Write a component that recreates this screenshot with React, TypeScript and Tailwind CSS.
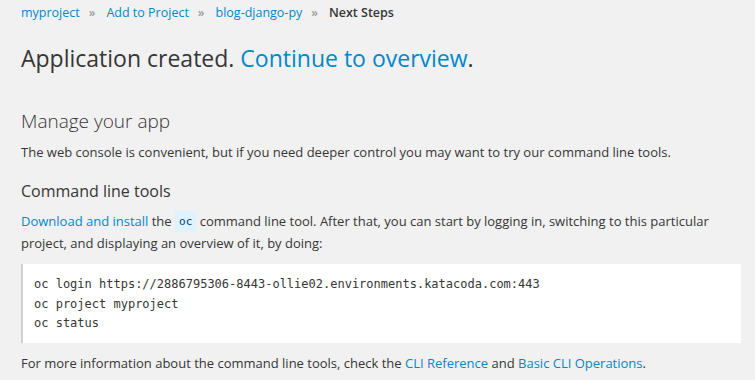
import React from "react";

export default function App() {
  return (
    <div className="w-[755px] h-[380px] overflow-hidden bg-[#f1f1f1] text-[#363636] font-['Open_Sans','Noto_Sans',sans-serif]">
      <div className="px-[21px]">
        <nav className="flex items-center h-[26px] text-[12.5px] leading-[26px]">
          <a className="text-[#0088ce]">myproject</a>
          <span className="ml-[9px] mr-[11px] text-[#9c9c9c] text-[12px] font-semibold">»</span>
          <a className="text-[#0088ce]">Add to Project</a>
          <span className="ml-[9px] mr-[11px] text-[#9c9c9c] text-[12px] font-semibold">»</span>
          <a className="text-[#0088ce]">blog-django-py</a>
          <span className="ml-[9px] mr-[11px] text-[#9c9c9c] text-[12px] font-semibold">»</span>
          <span className="font-semibold text-[#363636]">Next Steps</span>
        </nav>
        <h1 className="mt-[16px] text-[23px] leading-[32px] font-normal">
          Application created. <a className="text-[#0088ce]">Continue to overview</a>.
        </h1>
        <h2 className="mt-[34px] text-[19px] leading-[26px] font-light">Manage your app</h2>
        <p className="mt-[8px] text-[13px] leading-[20px]">
          The web console is convenient, but if you need deeper control you may want to try our command line tools.
        </p>
        <h3 className="mt-[18px] text-[16px] leading-[22px]">Command line tools</h3>
        <p className="mt-[8px] text-[13px] leading-[22px]">
          <a className="text-[#0088ce]">Download and install</a> the{" "}
          <code className="px-[4px] py-[4px] leading-none bg-[#def3ff] text-[#004368] font-['DejaVu_Sans_Mono',monospace] text-[11px] align-[1px]">oc</code>{" "}
          command line tool. After that, you can start by logging in, switching to this particular project, and displaying an overview of it, by doing:
        </p>
        <pre className="mt-[10px] w-[720px] bg-white border-l-2 border-[#d1d1d1] px-[11px] pt-[11px] pb-[9px] text-[12px] leading-[19.5px] font-['DejaVu_Sans_Mono',monospace] text-[#363636]">
{`oc login https://2886795306-8443-ollie02.environments.katacoda.com:443
oc project myproject
oc status`}
        </pre>
        <p className="mt-[10px] text-[13px] leading-[20px]">
          For more information about the command line tools, check the <a className="text-[#0088ce]">CLI Reference</a> and{" "}
          <a className="text-[#0088ce]">Basic CLI Operations</a>.
        </p>
      </div>
    </div>
  );
}
